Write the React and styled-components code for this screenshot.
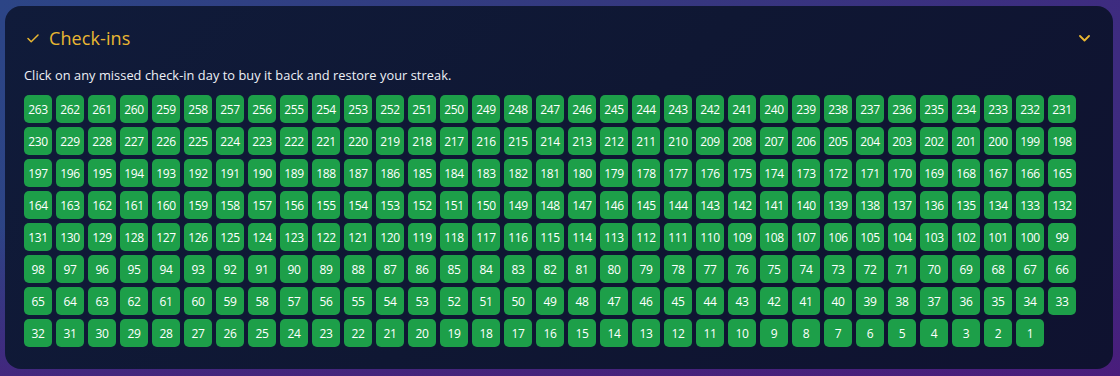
import React from "react";
import styled, { createGlobalStyle } from "styled-components";

const Global = createGlobalStyle`
  html, body { margin: 0; padding: 0; }
  body {
    width: 1120px;
    height: 376px;
    overflow: hidden;
    font-family: "Open Sans", "Liberation Sans", sans-serif;
    background: linear-gradient(100deg, #2c4586 0%, #34397f 50%, #3f2a80 100%);
  }
`;

const Page = styled.div`
  box-sizing: border-box;
  width: 1120px;
  height: 376px;
  padding: 6px 7px 7px 5px;
  background:
    linear-gradient(180deg, rgba(0,0,0,0) 60%, rgba(80,20,120,0.6) 100%),
    linear-gradient(100deg, #2c4586 0%, #34397f 50%, #3f2a80 100%);
`;

const Card = styled.section`
  box-sizing: border-box;
  height: 100%;
  border-radius: 16px;
  background: linear-gradient(135deg, #101b3a 0%, #0f1733 50%, #0f1230 100%);
  padding: 0 0 0 19px;
  display: flex;
  flex-direction: column;
`;

const Header = styled.div`
  display: flex;
  align-items: center;
  height: 64px;
  padding-right: 23px;
`;

const Title = styled.h2`
  margin: 0;
  display: flex;
  align-items: center;
  gap: 10px;
  padding-left: 3px;
  font-size: 18px;
  font-weight: 500;
  color: #e9b732;
  flex: 1;
  letter-spacing: 0.1px;
`;

const Hint = styled.p`
  margin: -3px 0 12px 0;
  font-size: 12.8px;
  font-weight: 500;
  color: #eef0f6;
  line-height: 16px;
  letter-spacing: 0.05px;
`;

const Grid = styled.div`
  display: grid;
  grid-template-columns: repeat(33, 28px);
  grid-auto-rows: 28px;
  gap: 4px;
`;

const Day = styled.button`
  box-sizing: border-box;
  width: 28px;
  height: 28px;
  padding: 0;
  border: none;
  border-radius: 5px;
  background: #1d9f49;
  color: #ffffff;
  font-family: "Open Sans", "Liberation Sans", sans-serif;
  font-size: 12px;
  font-weight: 500;
  letter-spacing: -0.3px;
  display: flex;
  align-items: center;
  justify-content: center;
  cursor: pointer;
`;

const Check = () => (
  <svg width="12" height="9" viewBox="0 0 12 9" fill="none">
    <path d="M1 4.5L4.2 7.7L11 1" stroke="#e9b732" strokeWidth="1.5" strokeLinecap="round" strokeLinejoin="round" />
  </svg>
);

const Chevron = () => (
  <svg width="11" height="7" viewBox="0 0 11 7" fill="none">
    <path d="M1 1L5.5 5.5L10 1" stroke="#e9b732" strokeWidth="1.8" strokeLinecap="round" strokeLinejoin="round" />
  </svg>
);

const days = Array.from({ length: 263 }, (_, i) => 263 - i);

export default function App() {
  return (
    <>
      <Global />
      <Page>
        <Card>
          <Header>
            <Title>
              <Check />
              Check-ins
            </Title>
            <Chevron />
          </Header>
          <Hint>Click on any missed check-in day to buy it back and restore your streak.</Hint>
          <Grid>
            {days.map((d) => (
              <Day key={d}>{d}</Day>
            ))}
          </Grid>
        </Card>
      </Page>
    </>
  );
}
